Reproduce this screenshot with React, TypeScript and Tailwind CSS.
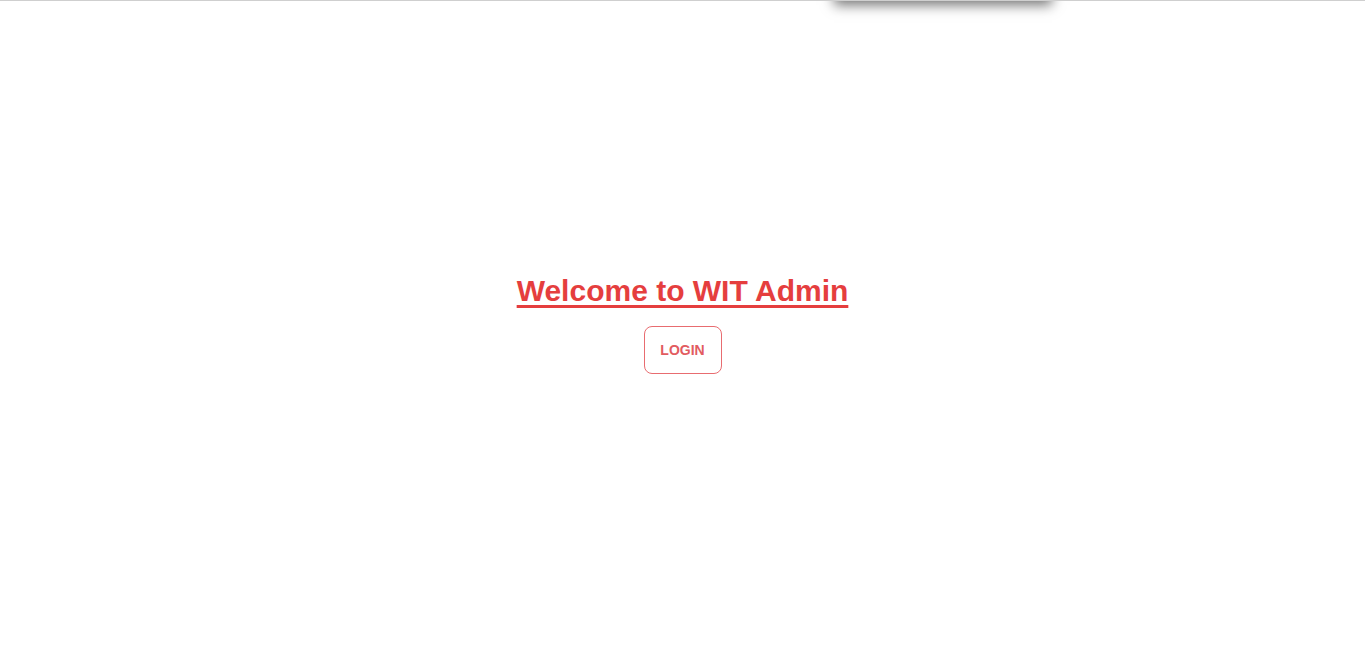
export default function App() {
  return (
    <div className="relative h-[646px] w-full overflow-hidden bg-white border-t border-[#cfcfcf] font-['Liberation_Sans',Arial,sans-serif]">
      {/* menu sliding in from above, only its shadow shows */}
      <div className="absolute left-[834px] top-[-40px] h-[40px] w-[218px] bg-white shadow-[0_4px_12px_rgba(0,0,0,0.55)]" />

      <div className="flex h-full flex-col items-center justify-center">
        <h1 className="text-[30px] font-bold leading-[36px] text-[#e53e3e] underline decoration-[3px] underline-offset-[4px]">
          Welcome to WIT Admin
        </h1>
        <button className="mt-[17px] h-[48px] w-[78px] rounded-[8px] border border-[#e86c70] text-[14px] font-bold text-[#e25b60]">
          LOGIN
        </button>
      </div>
    </div>
  );
}
